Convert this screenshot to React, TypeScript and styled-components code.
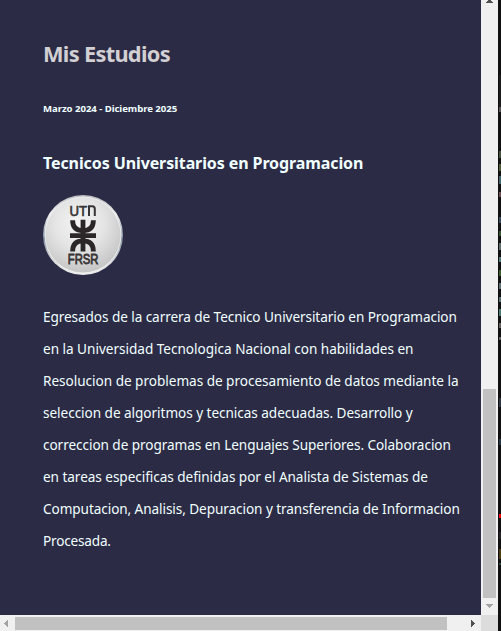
import React from 'react';
import styled, { createGlobalStyle } from 'styled-components';

const GlobalStyle = createGlobalStyle`
  * { box-sizing: border-box; }
  body { margin: 0; overflow: hidden; background: #101010; }
`;

const Window = styled.div`
  display: grid;
  grid-template-columns: 481px 17px 3px;
  grid-template-rows: 615px 16px;
  width: 501px;
  height: 631px;
  overflow: hidden;
  font-family: 'Noto Sans', 'Open Sans', sans-serif;
`;

const Panel = styled.main`
  background: #2c2b45;
  color: azure;
  padding: 38px 0 0 43px;
  overflow: hidden;
`;

const Title = styled.h2`
  margin: 0;
  height: 32px;
  font-size: 21.8px;
  line-height: 32px;
  letter-spacing: -0.7px;
  color: #d3d0d3;
  white-space: nowrap;
`;

const Period = styled.h6`
  margin: 23px 0 0;
  font-size: 9.6px;
  line-height: 32px;
  letter-spacing: -0.05px;
  white-space: nowrap;
`;

const Degree = styled.h4`
  margin: 22px 0 0;
  font-size: 16px;
  line-height: 32px;
  letter-spacing: -0.1px;
  white-space: nowrap;
`;

const Logo = styled.svg`
  display: block;
  margin-top: 16px;
  width: 80px;
  height: 80px;
`;

const Description = styled.p`
  margin: 26px 0 0;
  font-size: 13.6px;
  line-height: 32px;
`;

const Line = styled.span<{ $spacing: number }>`
  display: block;
  white-space: nowrap;
  letter-spacing: ${(p) => p.$spacing}px;
`;

const VerticalBar = styled.div`
  display: flex;
  flex-direction: column;
  align-items: center;
  background: #f0f0f0;
`;

const VerticalThumb = styled.div`
  width: 13px;
  height: 209px;
  margin-top: 386px;
  background: #c1c1c1;
`;

const HorizontalBar = styled.div`
  display: flex;
  align-items: flex-start;
  background: #f0f0f0;
`;

const HorizontalThumb = styled.div`
  width: 432px;
  height: 13px;
  margin: 2px 0 0;
  background: #c1c1c1;
`;

const Arrow = styled.svg<{ $w: number; $h: number; $margin: string }>`
  display: block;
  flex: none;
  width: ${(p) => p.$w}px;
  height: ${(p) => p.$h}px;
  margin: ${(p) => p.$margin};
`;

const Corner = styled.div`
  background: #dcdcdc;
`;

const Edge = styled.div`
  grid-column: 3;
  grid-row: 1 / 3;
  display: flex;
  flex-direction: column;
  background: #101010;
`;

const Speck = styled.i<{ $gap: number; $size: number; $color: string }>`
  margin: ${(p) => p.$gap}px 0 0 1px;
  height: ${(p) => p.$size}px;
  background: ${(p) => p.$color};
`;

const lines: [string, number][] = [
  ['Egresados de la carrera de Tecnico Universitario en Programacion', -0.08],
  ['en la Universidad Tecnologica Nacional con habilidades en', -0.025],
  ['Resolucion de problemas de procesamiento de datos mediante la', -0.03],
  ['seleccion de algoritmos y tecnicas adecuadas. Desarrollo y', -0.05],
  ['correccion de programas en Lenguajes Superiores. Colaboracion', -0.065],
  ['en tareas especificas definidas por el Analista de Sistemas de', -0.055],
  ['Computacion, Analisis, Depuracion y transferencia de Informacion', -0.08],
  ['Procesada.', -0.2],
];

const specks: [number, number, string][] = [
  [75, 32, '#1c1c1c'],
  [0, 5, '#575555'],
  [39, 7, '#46513b'],
  [6, 7, '#4d5a36'],
  [5, 8, '#46646b'],
  [8, 5, '#6b4e50'],
  [20, 6, '#38495a'],
  [8, 5, '#35532c'],
  [7, 7, '#5d6d6b'],
  [7, 5, '#547a7c'],
  [8, 6, '#3d5a2c'],
  [7, 6, '#5c7074'],
  [8, 5, '#597073'],
  [7, 7, '#4c7974'],
  [7, 5, '#665f5f'],
  [9, 3, '#625f5f'],
  [58, 9, '#2d3540'],
  [32, 6, '#263744'],
  [69, 4, '#f40612'],
  [14, 7, '#252326'],
  [10, 10, '#493b13'],
  [4, 2, '#2f4a38'],
];

function UniversityLogo() {
  return (
    <Logo viewBox="0 0 80 80" role="img" aria-label="UTN FRSR">
      <defs>
        <radialGradient id="face" cx="45%" cy="35%" r="66%">
          <stop offset="0" stopColor="#f5f5f5" />
          <stop offset="0.5" stopColor="#e4e4e4" />
          <stop offset="1" stopColor="#c4c4c4" />
        </radialGradient>
        <linearGradient id="rim" x1="0" y1="0" x2="0" y2="1">
          <stop offset="0" stopColor="#b9bcc0" />
          <stop offset="0.25" stopColor="#ededed" />
          <stop offset="0.55" stopColor="#8795a4" />
          <stop offset="0.75" stopColor="#c8ccd1" />
          <stop offset="1" stopColor="#eeeeee" />
        </linearGradient>
      </defs>
      <circle cx="40" cy="40" r="40" fill="url(#rim)" />
      <circle cx="40" cy="40" r="38" fill="url(#face)" stroke="#f4f4f4" strokeWidth="0.8" />
      <g fill="#383435" fontFamily="'Liberation Sans', sans-serif" stroke="#383435">
        <text x="26.6" y="21" fontSize="14.8" textLength="17.6" lengthAdjust="spacingAndGlyphs" strokeWidth="0.7">UT</text>
        <text x="24.8" y="69.4" fontSize="14" textLength="30.7" lengthAdjust="spacingAndGlyphs" strokeWidth="0.8">FRSR</text>
      </g>
      <path d="M46 21V11.3H49.2Q51.8 11.3 51.8 14V21" fill="none" stroke="#383435" strokeWidth="2" />
      <g fill="none" stroke="#2b2728" strokeWidth="4.8">
        <path d="M40 24.8V56.4M27 40.6H53" />
        <path d="M29.6 25.2C29.6 32.5 33.5 35.6 40 35.6S50.4 32.5 50.4 25.2" />
        <path d="M29.6 56.4C29.6 49 33.5 45.8 40 45.8S50.4 49 50.4 56.4" />
      </g>
    </Logo>
  );
}

export default function App() {
  return (
    <>
      <GlobalStyle />
      <Window>
        <Panel>
          <Title>Mis Estudios</Title>
          <Period>Marzo 2024 - Diciembre 2025</Period>
          <Degree>Tecnicos Universitarios en Programacion</Degree>
          <UniversityLogo />
          <Description>
            {lines.map(([text, spacing]) => (
              <Line key={text} $spacing={spacing}>{text} </Line>
            ))}
          </Description>
        </Panel>
        <VerticalBar>
          <Arrow $w={7} $h={3} $margin="0" viewBox="0 0 7 3" shapeRendering="crispEdges">
            <path d="M2 0H5V1H6V2H7V3H0V2H1V1H2Z" fill="#505050" />
          </Arrow>
          <VerticalThumb />
          <Arrow $w={7} $h={4} $margin="6px 0 0" viewBox="0 0 7 4" shapeRendering="crispEdges">
            <path d="M0 0H7V1H6V2H5V3H4V4H3V3H2V2H1V1H0Z" fill="#a3a3a3" />
          </Arrow>
        </VerticalBar>
        <Edge>
          {specks.map(([gap, size, color], i) => (
            <Speck key={i} $gap={gap} $size={size} $color={color} />
          ))}
        </Edge>
        <HorizontalBar>
          <Arrow $w={4} $h={7} $margin="5px 7px 0 4px" viewBox="0 0 4 7" shapeRendering="crispEdges">
            <path d="M4 0V7H3V6H2V5H1V4H0V3H1V2H2V1H3V0Z" fill="#a3a3a3" />
          </Arrow>
          <HorizontalThumb />
          <Arrow $w={4} $h={7} $margin="5px 0 0 24px" viewBox="0 0 4 7" shapeRendering="crispEdges">
            <path d="M0 0V7H1V6H2V5H3V4H4V3H3V2H2V1H1V0Z" fill="#505050" />
          </Arrow>
        </HorizontalBar>
        <Corner />
      </Window>
    </>
  );
}
